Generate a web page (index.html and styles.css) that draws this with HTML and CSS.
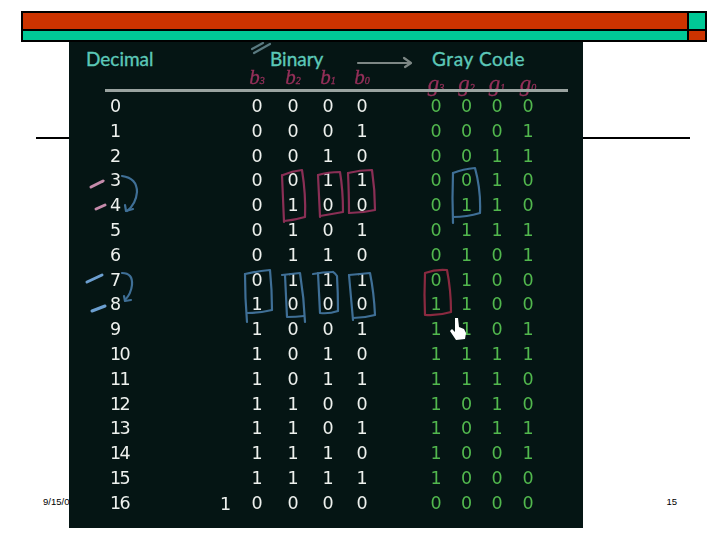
FILE: index.html
```html
<!DOCTYPE html>
<html lang="en">
<head>
<meta charset="utf-8">
<title>Gray Code</title>
<link rel="stylesheet" href="styles.css">
</head>
<body>
<div class="slide">
  <div class="banner">
    <div class="cell red"></div><div class="cell teal"></div>
    <div class="cell teal"></div><div class="cell red"></div>
  </div>
  <div class="rule"></div>
  <div class="footer"><span>9/15/09</span><span>15</span></div>

  <div class="picture">
    <div class="titles">
      <span class="title t-dec">Decimal</span>
      <span class="title t-bin">Binary</span>
      <span class="title t-gray">Gray Code</span>
    </div>
    <div class="row subs">
      <span></span>
      <span>b<sub>3</sub></span><span>b<sub>2</sub></span><span>b<sub>1</sub></span><span>b<sub>0</sub></span>
      <span></span>
      <span class="gs">g<sub>3</sub></span><span class="gs">g<sub>2</sub></span><span class="gs">g<sub>1</sub></span><span class="gs">g<sub>0</sub></span>
    </div>
    <div class="headline"></div>
    <div class="table">
      <div class="row"><span class="d">0</span><span>0</span><span>0</span><span>0</span><span>0</span><span></span><span class="g">0</span><span class="g">0</span><span class="g">0</span><span class="g">0</span></div>
      <div class="row"><span class="d">1</span><span>0</span><span>0</span><span>0</span><span>1</span><span></span><span class="g">0</span><span class="g">0</span><span class="g">0</span><span class="g">1</span></div>
      <div class="row"><span class="d">2</span><span>0</span><span>0</span><span>1</span><span>0</span><span></span><span class="g">0</span><span class="g">0</span><span class="g">1</span><span class="g">1</span></div>
      <div class="row"><span class="d">3</span><span>0</span><span>0</span><span>1</span><span>1</span><span></span><span class="g">0</span><span class="g">0</span><span class="g">1</span><span class="g">0</span></div>
      <div class="row"><span class="d">4</span><span>0</span><span>1</span><span>0</span><span>0</span><span></span><span class="g">0</span><span class="g">1</span><span class="g">1</span><span class="g">0</span></div>
      <div class="row"><span class="d">5</span><span>0</span><span>1</span><span>0</span><span>1</span><span></span><span class="g">0</span><span class="g">1</span><span class="g">1</span><span class="g">1</span></div>
      <div class="row"><span class="d">6</span><span>0</span><span>1</span><span>1</span><span>0</span><span></span><span class="g">0</span><span class="g">1</span><span class="g">0</span><span class="g">1</span></div>
      <div class="row"><span class="d">7</span><span>0</span><span>1</span><span>1</span><span>1</span><span></span><span class="g">0</span><span class="g">1</span><span class="g">0</span><span class="g">0</span></div>
      <div class="row"><span class="d">8</span><span>1</span><span>0</span><span>0</span><span>0</span><span></span><span class="g">1</span><span class="g">1</span><span class="g">0</span><span class="g">0</span></div>
      <div class="row"><span class="d">9</span><span>1</span><span>0</span><span>0</span><span>1</span><span></span><span class="g">1</span><span class="g">1</span><span class="g">0</span><span class="g">1</span></div>
      <div class="row"><span class="d">10</span><span>1</span><span>0</span><span>1</span><span>0</span><span></span><span class="g">1</span><span class="g">1</span><span class="g">1</span><span class="g">1</span></div>
      <div class="row"><span class="d">11</span><span>1</span><span>0</span><span>1</span><span>1</span><span></span><span class="g">1</span><span class="g">1</span><span class="g">1</span><span class="g">0</span></div>
      <div class="row"><span class="d">12</span><span>1</span><span>1</span><span>0</span><span>0</span><span></span><span class="g">1</span><span class="g">0</span><span class="g">1</span><span class="g">0</span></div>
      <div class="row"><span class="d">13</span><span>1</span><span>1</span><span>0</span><span>1</span><span></span><span class="g">1</span><span class="g">0</span><span class="g">1</span><span class="g">1</span></div>
      <div class="row"><span class="d">14</span><span>1</span><span>1</span><span>1</span><span>0</span><span></span><span class="g">1</span><span class="g">0</span><span class="g">0</span><span class="g">1</span></div>
      <div class="row"><span class="d">15</span><span>1</span><span>1</span><span>1</span><span>1</span><span></span><span class="g">1</span><span class="g">0</span><span class="g">0</span><span class="g">0</span></div>
      <div class="row"><span class="d d-last">16<b class="carry">1</b></span><span>0</span><span>0</span><span>0</span><span>0</span><span></span><span class="g">0</span><span class="g">0</span><span class="g">0</span><span class="g">0</span></div>
    </div>

    <svg class="marks" viewBox="69 42 514 486" width="514" height="486" aria-hidden="true">
      <g class="ink slash">
        <path d="M252 49 L263 43"/><path d="M254 53 L270 44"/>
      </g>
      <g class="ink arrow-gray">
        <path d="M358 63 L410 63"/><path d="M404 58 L411 63 L405 67"/>
      </g>
      <g class="ink pink">
        <path d="M283 175 Q292 171 302 170 Q306 195 305 217 Q295 220 284 221"/><path d="M282 175 Q283 200 284 222"/>
        <path d="M318 175 Q328 172 340 172 Q343 190 343 212 Q332 214 320 216"/><path d="M318 175 Q319 195 320 217"/>
        <path d="M348 173 Q360 170 372 170 Q375 190 375 210 Q362 213 349 213"/><path d="M348 173 Q349 195 349 213"/>
      </g>
      <g class="ink red-box">
        <path d="M425 273 Q436 269 447 270 Q451 290 451 312 Q438 316 425 315 Q424 295 425 273 Z"/>
      </g>
      <g class="ink blue">
        <path d="M245 274 Q258 271 270 270 Q272 290 272 310 Q259 313 247 313"/><path d="M245 274 Q245 298 247 322"/>
        <path d="M282 275 Q291 274 300 273 Q304 298 305 322"/><path d="M285 275 Q286 297 287 317 Q296 317 304 316"/>
        <path d="M313 274 Q323 272 333 272"/><path d="M318 273 Q319 293 320 313 Q329 314 338 311 Q338 293 337 276 Q335 273 333 272"/>
        <path d="M349 275 Q360 274 370 273 Q374 293 375 315 Q364 318 353 318"/><path d="M349 275 Q351 298 353 320"/>
        <path d="M453 173 Q463 169 475 168 Q481 190 480 213 Q467 217 453 217"/><path d="M453 173 Q452 198 453 223"/>
        <path d="M122 176 Q137 178 137 192 Q136 204 127 211"/><path d="M125 205 L126 211 L133 209"/>
        <path d="M122 273 Q133 273 132 285 Q131 294 125 300"/><path d="M124 296 L125 301 L131 300"/>
      </g>
      <g class="ink dash-pink">
        <path d="M91 187 L103 181"/><path d="M96 209 L105 205"/>
      </g>
      <g class="ink dash-blue">
        <path d="M87 282 L102 275"/><path d="M92 311 L105 306"/>
      </g>
      <path class="hand" d="M455 318 L458 318 L459 327 L464 329 L466 333 L465 339 L456 340 L450 331 L452 329 L455 332 Z"/>
    </svg>
  </div>
</div>
</body>
</html>
```
FILE: styles.css
```css
* { box-sizing: border-box; }
html, body { margin: 0; padding: 0; background: #fff; }
.slide {
  position: relative;
  width: 720px;
  height: 540px;
  padding-top: 11px;
  overflow: hidden;
  font-family: "Liberation Sans", Arial, sans-serif;
}
.banner {
  display: grid;
  grid-template-columns: 1fr 16px;
  grid-template-rows: 16px 9px;
  gap: 2px;
  width: 686px;
  height: 31px;
  margin-left: 21px;
  padding: 2px;
  background: #000;
}
.red { background: #cc3300; }
.teal { background: #00c896; }
.rule {
  width: 654px;
  height: 2px;
  margin: 95px 0 0 36px;
  background: #000;
}
.footer {
  display: flex;
  justify-content: space-between;
  width: 634px;
  margin: 357px 0 0 43px;
  font-size: 9.5px;
  line-height: 11px;
  color: #000;
}
.picture {
  position: absolute;
  left: 69px;
  top: 42px;
  width: 514px;
  height: 486px;
  padding: 6px 0 0 41px;
  background: #051514;
  font-family: "DejaVu Sans", sans-serif;
}
.titles {
  display: flex;
  height: 19px;
  margin-left: -24px;
  font-family: "Lato", sans-serif;
}
.title {
  font-size: 19px;
  line-height: 22px;
  font-weight: 400;
  color: #5cc8b8;
  white-space: nowrap;
  -webkit-text-stroke: 0.35px #5cc8b8;
}
.t-dec { width: 184px; }
.t-bin { width: 162px; }
.t-gray { letter-spacing: 0.6px; }
.row {
  display: grid;
  grid-template-columns: 129px 36px 36px 34px 34px 42px 30px 31px 30px 32px;
  height: 24.8px;
  font-size: 17.5px;
  line-height: 24.8px;
  color: #eef1ee;
  text-align: center;
  filter: blur(0.35px);
}
.row .d { position: relative; text-align: left; letter-spacing: -1.6px; }
.row .g { color: #52b84e; }
.row .carry {
  position: absolute;
  left: 110px;
  top: 1px;
  font-weight: 400;
}
.subs {
  height: 22px;
  padding-top: 1px;
  font-family: "Liberation Serif", serif;
  font-style: italic;
  font-size: 21px;
  line-height: 19px;
  color: #96305a;
  white-space: nowrap;
  -webkit-text-stroke: 0.3px #96305a;
}
.subs sub { font-size: 10px; line-height: 0; vertical-align: baseline; }
.subs .gs { padding-top: 6px; font-size: 23px; }
.headline {
  position: relative;
  width: 463px;
  height: 3px;
  margin: 0 0 2px -5px;
  background: #9aa3a0;
}
.marks {
  position: absolute;
  left: 0;
  top: 0;
  filter: blur(0.4px);
}
.ink { fill: none; stroke-linecap: round; stroke-linejoin: round; stroke-width: 2.2; }
.pink { stroke: #8a2f55; }
.red-box { stroke: #8a2a40; }
.blue { stroke: #3f6f96; }
.slash { stroke: #5a7a80; }
.arrow-gray { stroke: #7d8785; }
.dash-pink { stroke: #c58bab; stroke-width: 3; }
.dash-blue { stroke: #6c9fd0; stroke-width: 3; }
.hand { fill: #fff; }
```
